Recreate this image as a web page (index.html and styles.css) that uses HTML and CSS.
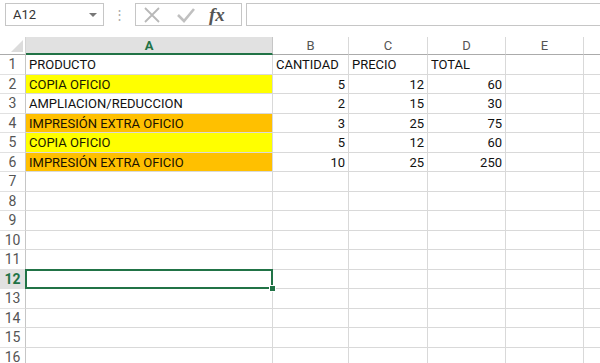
FILE: index.html
```html
<!DOCTYPE html>
<html>
<head>
    <title>Libro1 - Excel</title>
    <link rel="stylesheet" href="styles.css">
</head>
<body>
    <div class="toolbar">
        <div class="namebox">
            <span>A12</span>
            <svg class="arrow" width="8" height="5" viewBox="0 0 8 5"><path d="M0 0 L8 0 L4 4 Z" fill="#777"/></svg>
        </div>
        <div class="grip">⋮</div>
        <div class="fxbox">
            <svg width="18" height="18" viewBox="0 0 18 18"><path d="M2 2 L16 16 M16 2 L2 16" stroke="#b8b8b8" stroke-width="1.8" fill="none"/></svg>
            <svg width="20" height="18" viewBox="0 0 20 18"><path d="M2 9 L8 15 L18 3" stroke="#c0c0c0" stroke-width="2.6" fill="none"/></svg>
            <span class="fx">fx</span>
        </div>
        <div class="formula"></div>
    </div>

    <div class="sheet">
        <div class="corner"><svg width="12" height="12" viewBox="0 0 12 12"><path d="M12 0 L12 12 L0 12 Z" fill="#dcdcdc"/></svg></div>
        <div class="colhead active">A</div>
        <div class="colhead">B</div>
        <div class="colhead">C</div>
        <div class="colhead">D</div>
        <div class="colhead">E</div>
        <div class="colhead rest"></div>

        <div class="rowhead">1</div>
        <div class="cell">PRODUCTO</div>
        <div class="cell">CANTIDAD</div>
        <div class="cell">PRECIO</div>
        <div class="cell">TOTAL</div>
        <div class="cell"></div>
        <div class="cell rest"></div>

        <div class="rowhead">2</div>
        <div class="cell yellow">COPIA OFICIO</div>
        <div class="cell num">5</div>
        <div class="cell num">12</div>
        <div class="cell num">60</div>
        <div class="cell"></div>
        <div class="cell rest"></div>

        <div class="rowhead">3</div>
        <div class="cell">AMPLIACION/REDUCCION</div>
        <div class="cell num">2</div>
        <div class="cell num">15</div>
        <div class="cell num">30</div>
        <div class="cell"></div>
        <div class="cell rest"></div>

        <div class="rowhead">4</div>
        <div class="cell orange">IMPRESIÓN EXTRA OFICIO</div>
        <div class="cell num">3</div>
        <div class="cell num">25</div>
        <div class="cell num">75</div>
        <div class="cell"></div>
        <div class="cell rest"></div>

        <div class="rowhead">5</div>
        <div class="cell yellow">COPIA OFICIO</div>
        <div class="cell num">5</div>
        <div class="cell num">12</div>
        <div class="cell num">60</div>
        <div class="cell"></div>
        <div class="cell rest"></div>

        <div class="rowhead">6</div>
        <div class="cell orange">IMPRESIÓN EXTRA OFICIO</div>
        <div class="cell num">10</div>
        <div class="cell num">25</div>
        <div class="cell num">250</div>
        <div class="cell"></div>
        <div class="cell rest"></div>
    </div>

    <script>
        // empty rows 7..16
        const sheet = document.querySelector('.sheet');
        for (let r = 7; r <= 16; r++) {
            let html = `<div class="rowhead${r === 12 ? ' active' : ''}">${r}</div>`;
            html += `<div class="cell${r === 12 ? ' selected' : ''}"></div>`;
            for (let c = 0; c < 4; c++) html += '<div class="cell"></div>';
            html += '<div class="cell rest"></div>';
            sheet.insertAdjacentHTML('beforeend', html);
        }
    </script>
</body>
</html>
```

FILE: styles.css
```css
body {
    margin: 0;
    padding: 0;
    background: #fff;
    font-family: Roboto, "Liberation Sans", sans-serif;
    color: #222;
    overflow: hidden;
}
.toolbar {
    display: flex;
    align-items: center;
    height: 23px;
    padding: 3px 0 0 5px;
}
.namebox {
    box-sizing: border-box;
    width: 99px;
    height: 23px;
    border: 1px solid #c6c6c6;
    display: flex;
    align-items: center;
    justify-content: space-between;
    padding: 0 6px 0 7px;
    font-size: 13px;
    color: #333;
}
.namebox .arrow {
    margin-top: 1px;
}
.grip {
    width: 31px;
    text-align: center;
    color: #aaa;
    font-size: 13px;
}
.fxbox {
    box-sizing: border-box;
    width: 107px;
    height: 23px;
    border: 1px solid #c6c6c6;
    display: flex;
    align-items: center;
    padding-left: 7px;
    gap: 15px;
}
.fx {
    font-family: "Liberation Serif", serif;
    font-style: italic;
    font-weight: bold;
    font-size: 19px;
    color: #555;
    margin-left: -2px;
}
.formula {
    box-sizing: border-box;
    flex: 1;
    height: 23px;
    margin-left: 4px;
    border: 1px solid #c6c6c6;
    border-right: none;
}
.sheet {
    display: grid;
    grid-template-columns: 26px 247px 76px 79px 78px 78px 1fr;
    grid-template-rows: 18px repeat(16, 19.5px);
    margin-top: 11px;
    position: relative;
}
.corner {
    box-sizing: border-box;
    border-right: 1px solid #d4d4d4;
    border-bottom: 1px solid #ababab;
    display: flex;
    align-items: flex-end;
    justify-content: flex-end;
    padding: 0 2px 2px 0;
}
.colhead {
    box-sizing: border-box;
    border-right: 1px solid #d9d9d9;
    border-bottom: 1px solid #ababab;
    font-size: 13px;
    color: #555;
    text-align: center;
    line-height: 17px;
}
.colhead.active {
    background: #e1e1e1;
    color: #217346;
    font-weight: bold;
    border-bottom: 2px solid #217346;
    border-right-color: #c6c6c6;
}
.rowhead {
    box-sizing: border-box;
    border-right: 1px solid #c6c6c6;
    border-bottom: 1px solid #e1e1e1;
    font-size: 14px;
    color: #555;
    text-align: center;
    line-height: 19px;
}
.rowhead.active {
    background: #e1e1e1;
    color: #217346;
    font-weight: bold;
}
.cell {
    box-sizing: border-box;
    border-right: 1px solid #d9d9d9;
    border-bottom: 1px solid #d9d9d9;
    font-size: 13px;
    color: #111;
    line-height: 19px;
    padding: 0 3px;
    white-space: nowrap;
}
.rest {
    border-right: none;
}
.num {
    text-align: right;
    padding-right: 3px;
}
.yellow {
    background: #ffff00;
    color: #1a1a00;
}
.orange {
    background: #ffc000;
    color: #1a1200;
}
.selected {
    position: relative;
}
.selected::before {
    content: "";
    position: absolute;
    left: -1px;
    top: -1px;
    right: -1px;
    bottom: -1px;
    border: 2px solid #217346;
}
.selected::after {
    content: "";
    position: absolute;
    right: -4px;
    bottom: -4px;
    width: 5px;
    height: 5px;
    background: #217346;
    border: 1px solid #fff;
}
```
